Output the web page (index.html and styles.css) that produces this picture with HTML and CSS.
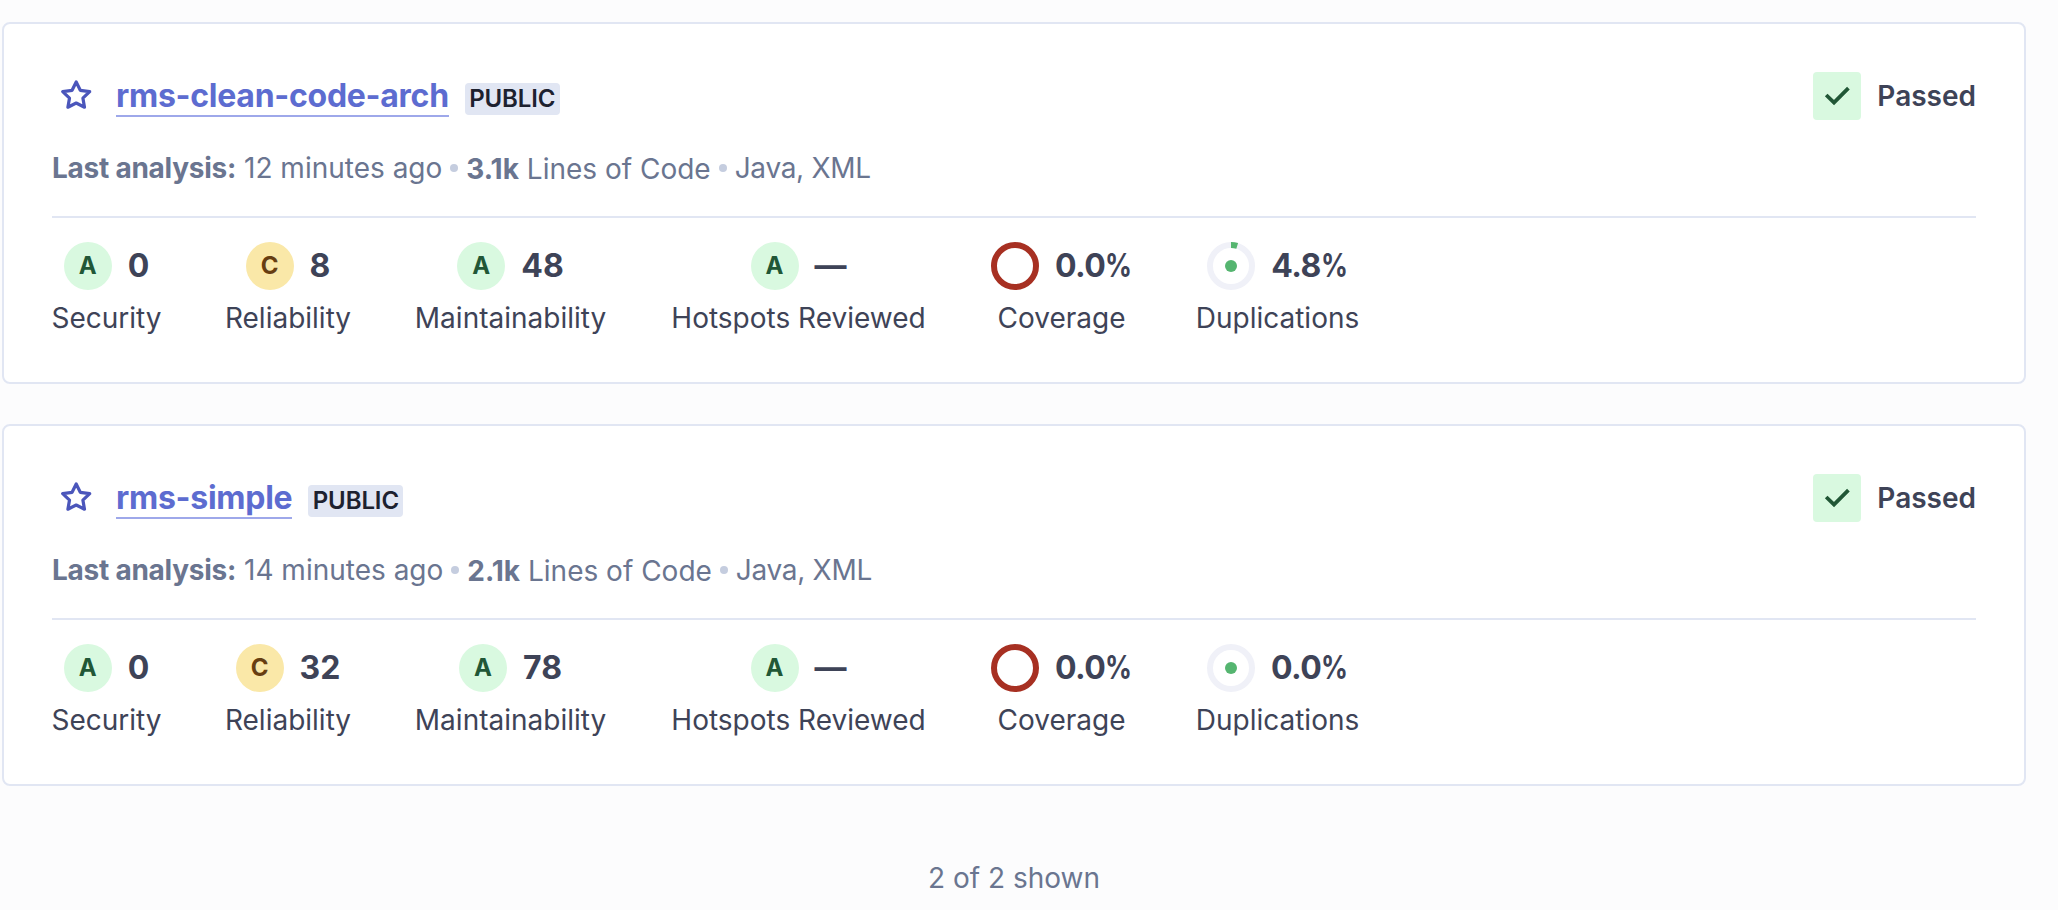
FILE: index.html
```html
<!DOCTYPE html>
<html lang="en">
<head>
<meta charset="utf-8">
<title>Projects</title>
<link rel="stylesheet" href="styles.css">
</head>
<body>
<main class="projects">
  <article class="card">
    <header class="head">
      <svg class="star" viewBox="0 0 48 48"><path d="M24.2 10l4.1 8.3 9.4 1.4-6.8 6.4 1.6 9.1-8.3-4.2-8.3 4.2 1.6-9.1-6.8-6.4 9.4-1.4z"/></svg>
      <a class="name">rms-clean-code-arch</a>
      <span class="badge">PUBLIC</span>
      <div class="gate"><svg class="gate-icon" viewBox="0 0 48 48"><path d="M13.2 23l7.8 7.6 14.4-14.4"/></svg><span>Passed</span></div>
    </header>
    <div class="meta"><span><b class="when">Last analysis:</b> 12 minutes ago</span><i class="dot"></i><span class="loc"><b>3.1k</b> Lines of Code</span><i class="dot"></i><span class="langs">Java, XML</span></div>
    <div class="metrics">
      <div class="metric"><div class="value"><span class="rating a">A</span>0</div><div class="label">Security</div></div>
      <div class="metric"><div class="value"><span class="rating c">C</span>8</div><div class="label">Reliability</div></div>
      <div class="metric"><div class="value"><span class="rating a">A</span>48</div><div class="label">Maintainability</div></div>
      <div class="metric"><div class="value"><span class="rating a">A</span>—</div><div class="label">Hotspots Reviewed</div></div>
      <div class="metric"><div class="value"><svg class="ring" viewBox="0 0 48 48"><circle class="uncovered" cx="24" cy="24" r="21"/></svg><span class="ratio">0.0<span class="pct">%</span></span></div><div class="label">Coverage</div></div>
      <div class="metric"><div class="value"><svg class="ring" viewBox="0 0 48 48"><circle class="track" cx="24" cy="24" r="21"/><path class="arc" d="M24 3A21 21 0 0 1 30.2 3.9"/><circle class="core" cx="24" cy="24" r="6"/></svg><span class="ratio">4.8<span class="pct">%</span></span></div><div class="label">Duplications</div></div>
    </div>
  </article>
  <article class="card">
    <header class="head">
      <svg class="star" viewBox="0 0 48 48"><path d="M24.2 10l4.1 8.3 9.4 1.4-6.8 6.4 1.6 9.1-8.3-4.2-8.3 4.2 1.6-9.1-6.8-6.4 9.4-1.4z"/></svg>
      <a class="name">rms-simple</a>
      <span class="badge">PUBLIC</span>
      <div class="gate"><svg class="gate-icon" viewBox="0 0 48 48"><path d="M13.2 23l7.8 7.6 14.4-14.4"/></svg><span>Passed</span></div>
    </header>
    <div class="meta"><span><b class="when">Last analysis:</b> 14 minutes ago</span><i class="dot"></i><span class="loc"><b>2.1k</b> Lines of Code</span><i class="dot"></i><span class="langs">Java, XML</span></div>
    <div class="metrics">
      <div class="metric"><div class="value"><span class="rating a">A</span>0</div><div class="label">Security</div></div>
      <div class="metric"><div class="value"><span class="rating c">C</span>32</div><div class="label">Reliability</div></div>
      <div class="metric"><div class="value"><span class="rating a">A</span>78</div><div class="label">Maintainability</div></div>
      <div class="metric"><div class="value"><span class="rating a">A</span>—</div><div class="label">Hotspots Reviewed</div></div>
      <div class="metric"><div class="value"><svg class="ring" viewBox="0 0 48 48"><circle class="uncovered" cx="24" cy="24" r="21"/></svg><span class="ratio">0.0<span class="pct">%</span></span></div><div class="label">Coverage</div></div>
      <div class="metric"><div class="value"><svg class="ring" viewBox="0 0 48 48"><circle class="track" cx="24" cy="24" r="21"/><circle class="core" cx="24" cy="24" r="6"/></svg><span class="ratio">0.0<span class="pct">%</span></span></div><div class="label">Duplications</div></div>
    </div>
  </article>
  <footer class="shown">2 of 2 shown</footer>
</main>
</body>
</html>
```
FILE: styles.css
```css
* { box-sizing: border-box; }
body {
  margin: 0;
  height: 910px;
  overflow: hidden;
  background: #fcfcfd;
  font-family: Inter, "Liberation Sans", sans-serif;
  font-size: 28px;
  line-height: 40px;
  color: #3e4357;
}
b { font-weight: 650; }
.projects {
  width: 2026px;
  padding: 22px 0 0 2px;
  display: flex;
  flex-direction: column;
  gap: 40px;
}
.card {
  height: 362px;
  padding: 48px;
  border: 2px solid #e1e6f3;
  border-radius: 8px;
  background: #fff;
}
.head { display: flex; align-items: center; height: 48px; }
.star { width: 48px; height: 48px; margin-right: 16px; fill: none; stroke: #4b56bb; stroke-width: 3.2; stroke-linejoin: round; }
.name {
  margin-top: -2px;
  height: 44px;
  line-height: 46px;
  border-bottom: 2px solid #9ea8ea;
  font-size: 32px;
  font-weight: 650;
  letter-spacing: -0.27px;
  color: #5d6cd0;
}
.badge {
  margin: 6px 0 0 16px;
  height: 32px;
  width: 95px;
  text-align: center;
  border-radius: 4px;
  background: #e1e6f3;
  font-size: 24px;
  line-height: 32px;
  font-weight: 600;
  letter-spacing: -0.1px;
  color: #1d212f;
}
.gate { margin-left: auto; display: flex; align-items: center; gap: 16px; font-weight: 600; }
.gate-icon { width: 48px; height: 48px; border-radius: 4px; background: #d9f9e0; fill: none; stroke: #215736; stroke-width: 3.8; }
.meta { display: flex; align-items: center; margin-top: 28px; height: 40px; color: #6a7590; }
.when { letter-spacing: -0.25px; }
.langs { letter-spacing: -0.3px; }
.loc { padding-top: 2px; }
.dot { width: 8px; height: 8px; margin: 0 8px; border-radius: 50%; background: #c5cddf; }
.metrics {
  display: grid;
  grid-template-columns: 109px 126px 191px 257px 141px 163px;
  gap: 64px;
  margin-top: 28px;
  padding-top: 24px;
  border-top: 2px solid #e1e6f3;
}
.metric { display: flex; flex-direction: column; align-items: center; gap: 8px; white-space: nowrap; }
.value { display: flex; align-items: center; gap: 16px; height: 48px; font-size: 32px; font-weight: 650; }
.rating { width: 48px; height: 48px; border-radius: 50%; text-align: center; font-size: 24px; line-height: 48px; }
.a { background: #d9f9e0; color: #215736; }
.c { background: #fae8a8; color: #673e11; }
.ring { width: 48px; height: 48px; fill: none; stroke-width: 6; }
.uncovered { stroke: #a73022; }
.track { stroke: #f0f1f8; }
.arc { stroke: #55b570; }
.core { fill: #55b570; }
.ratio { letter-spacing: -0.6px; }
.pct { display: inline-block; margin-right: -5px; transform: scaleX(0.83); transform-origin: left; }
.shown { margin-top: 32px; text-align: center; color: #6a7590; }
```
